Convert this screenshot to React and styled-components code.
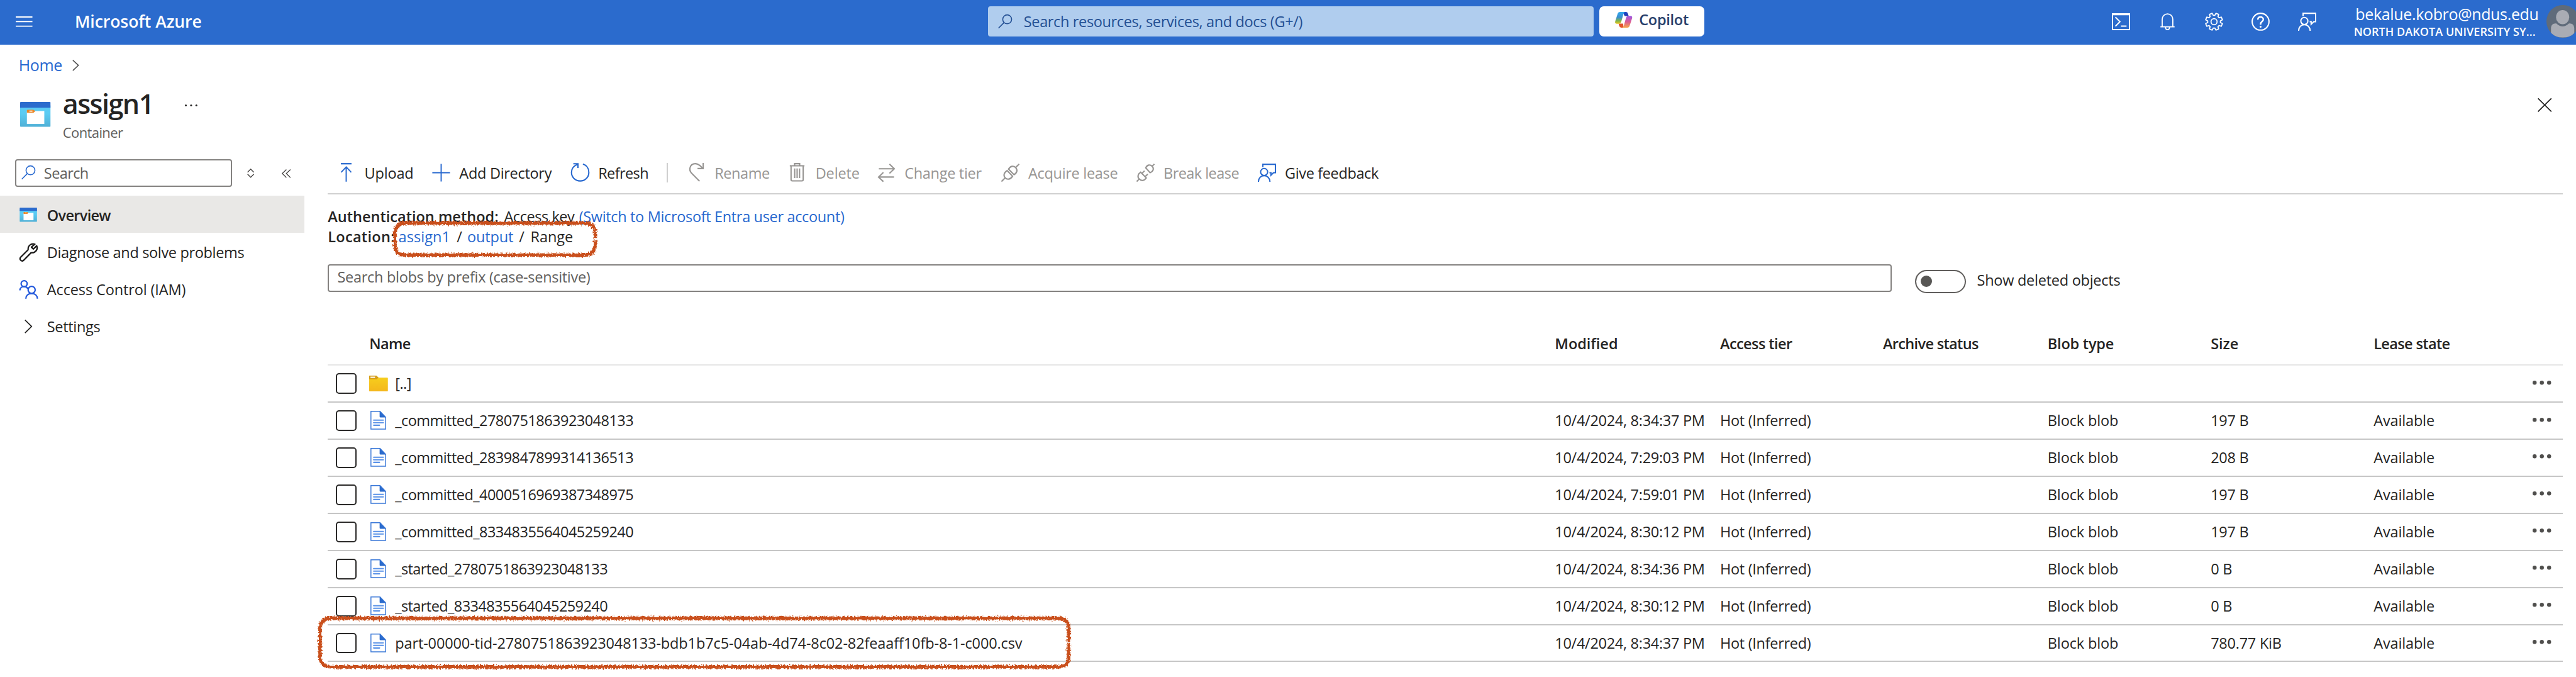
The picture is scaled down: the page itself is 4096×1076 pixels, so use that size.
import React from "react";
import styled, { createGlobalStyle, css } from "styled-components";

/* Design units are physical pixels of the portal at full zoom. */
const SCALE = 4096 / 5092;
const u = (n) => `${+(n * SCALE).toFixed(2)}px`;

const color = {
  brand: "#2b6bcd",
  link: "#2768cf",
  text: "#252423",
  subtle: "#605e5c",
  disabled: "#979593",
  mark: "#c9501a",
};

const GlobalStyle = createGlobalStyle`
  * { box-sizing: border-box; }
  html, body { margin: 0; background: #fff; }
  body {
    width: 4096px;
    height: 1076px;
    overflow: hidden;
    font-family: "Open Sans", "Noto Sans", sans-serif;
    font-size: 23.5px;
    color: ${color.text};
  }
`;

const Label = styled.span`
  white-space: pre;
  font-size: ${(p) => p.$size || 23.5}px;
  font-weight: ${(p) => (p.$strong ? 600 : 400)};
  letter-spacing: ${(p) => p.$track || 0}px;
  ${(p) => p.$tone && css`color: ${p.$tone};`}
`;

const Svg = styled.svg`
  display: block;
  flex: none;
  width: ${(p) => u(p.$w)};
  height: ${(p) => u(p.$h)};
  overflow: visible;
  fill: none;
  stroke: currentColor;
  stroke-width: ${(p) => p.$stroke || 2.4};
`;

const Icon = ({ w = 36, h = 36, stroke, children }) => (
  <Svg $w={w} $h={h} $stroke={stroke} viewBox={`0 0 ${w} ${h}`} aria-hidden="true">
    {children}
  </Svg>
);

/* ---------- icons ---------- */

const MenuIcon = () => (
  <Icon w={33} h={21}>
    <path d="M0 1.3H33M0 10.3H33M0 19.4H33" />
  </Icon>
);
const SearchIcon = () => (
  <Icon w={28} h={28} stroke={2}>
    <circle cx="18" cy="9.6" r="8.8" />
    <path d="M11.8 16L0.8 27" />
  </Icon>
);
const ShellIcon = () => (
  <Icon stroke={2.4}>
    <path d="M1.2 2.4H34.8V33.6H1.2ZM1.2 4.2H34.8M7 9L16 18L7 27M18 26.8H29" />
  </Icon>
);
const BellIcon = () => (
  <Icon stroke={2.2}>
    <path d="M7.5 27V13.5C7.5 7 12 2.6 18 2.6S28.5 7 28.5 13.5V27M4 28H32M14 28.5C14 31.5 15.6 33.6 18 33.6S22 31.5 22 28.5" />
  </Icon>
);
const GearIcon = () => {
  const pts = [];
  for (let i = 0; i < 8; i += 1) {
    [[-0.27, 12.6], [-0.17, 17], [0.17, 17], [0.27, 12.6]].forEach(([da, r]) => {
      const a = (i * Math.PI) / 4 + Math.PI / 8 + da;
      pts.push(`${(18 + r * Math.cos(a)).toFixed(2)},${(18 + r * Math.sin(a)).toFixed(2)}`);
    });
  }
  return (
    <Icon stroke={2.2}>
      <polygon points={pts.join(" ")} strokeLinejoin="round" />
      <circle cx="18" cy="18" r="6" />
    </Icon>
  );
};
const HelpIcon = () => (
  <Icon stroke={2.6}>
    <circle cx="18" cy="18" r="16.6" />
    <path d="M12.6 14C12.6 10.6 15 8.8 18 8.8S23.4 10.8 23.4 13.6C23.4 17.6 18 18 18 22.4V24" strokeWidth="3" />
    <circle cx="18" cy="28" r="1.9" fill="currentColor" stroke="none" />
  </Icon>
);
const FeedbackIcon = () => (
  <Icon stroke={2.5}>
    <path d="M10 7V1.4H34.8V18H31L26 23V18H23" />
    <circle cx="12.5" cy="16.6" r="7" />
    <path d="M1.2 36C1.2 29 6 23.8 12.5 23.8S24 29 24 36" />
  </Icon>
);
const ChevronRight = ({ w, h }) => (
  <Icon w={w} h={h} stroke={2}>
    <path d={`M1 0.8L${w - 1} ${h / 2}L1 ${h - 0.8}`} />
  </Icon>
);
const SortIcon = () => (
  <Icon w={14} h={18} stroke={1.8}>
    <path d="M0.8 7.2L7 1L13.2 7.2M0.8 10.8L7 17L13.2 10.8" />
  </Icon>
);
const CollapseIcon = () => (
  <Icon w={18} h={17} stroke={1.7}>
    <path d="M9.2 0.6L1 8.5L9.2 16.4M17.2 0.6L9 8.5L17.2 16.4" />
  </Icon>
);
const CloseIcon = () => (
  <Icon w={28} h={27} stroke={2.2}>
    <path d="M0.8 0.5L27.2 26.5M27.2 0.5L0.8 26.5" />
  </Icon>
);
const ContainerIcon = ({ w, h }) => (
  <Svg $w={w} $h={h} viewBox="0 0 60 49" aria-hidden="true">
    <defs>
      <linearGradient id="container-body" x1="0" y1="0" x2="0" y2="1">
        <stop offset="0" stopColor="#5bcdf6" />
        <stop offset="0.4" stopColor="#5bcbf2" />
        <stop offset="1" stopColor="#50b0d6" />
      </linearGradient>
    </defs>
    <g stroke="none">
      <rect y="6" width="60" height="43" rx="1.5" fill="url(#container-body)" />
      <path d="M0 11.5V1.5Q0 0 1.5 0H58.5Q60 0 60 1.5V11.5Z" fill={color.brand} />
      <rect x="13.4" y="18" width="34.4" height="25.6" fill="#fff" />
      <path d="M13.4 17Q13.4 15.4 15 15.4H26.5L30 18.2L26.5 21.6H13.4Z" fill="#e8872a" />
      <rect x="18.3" y="17.2" width="6" height="2" fill="#fff" />
    </g>
  </Svg>
);
const WrenchIcon = () => (
  <Icon stroke={2.8}>
    <path
      d="M31.5 3.4C25 -0.2 16.4 4 17 13.6L2.6 28C-1.6 33 4.6 38.4 8.8 34L23 19.4C31.8 20.4 37 12.6 34 5.8L27.6 12.2L23.6 8.6L30 2.6"
      strokeLinejoin="round"
    />
  </Icon>
);
const PeopleIcon = () => (
  <Icon w={36} h={37} stroke={2.8}>
    <circle cx="9.2" cy="7.3" r="6" />
    <path d="M0.8 20.5C0.8 16 4.6 13 9.2 13C12.4 13 15 14.4 16.4 17" />
    <circle cx="24" cy="19.5" r="7" />
    <path d="M12.6 37C12.6 31 17 26.6 24 26.6S35.4 31 35.4 37" />
  </Icon>
);
const UploadIcon = () => (
  <Icon h={37}>
    <path d="M7.5 1.5H28.5" strokeWidth="2.8" />
    <path d="M18 37V8M8 18.5L18 8L28 18.5" />
  </Icon>
);
const PlusIcon = () => (
  <Icon>
    <path d="M18 0.5V35.5M0.5 18H35.5" />
  </Icon>
);
const RefreshIcon = () => (
  <Icon h={37} stroke={2.6}>
    <path d="M23.5 2.2C31 4.4 35.2 11 35.2 18.6C35.2 28.4 27.6 35.6 18 35.6S0.9 28.4 0.9 18.8C0.9 11.6 5.6 5.4 13.2 2.6" />
    <path d="M4.5 1.5H13.6V10" />
  </Icon>
);
const RenameIcon = () => (
  <Icon h={37} stroke={2.6}>
    <path d="M24 36L8 20C2 13 5 1.4 15.6 1.4C22 1.4 25.6 5 30 10.4M31.2 0V11H20" />
  </Icon>
);
const TrashIcon = () => (
  <Icon h={37} stroke={2.6}>
    <path d="M3.5 5.5H32.5M13 5V1.4H23V5M6 6V33Q6 35.5 8.6 35.5H27.4Q30 35.5 30 33V6M13.2 11V30M18 11V30M22.8 11V30" />
  </Icon>
);
const SwapIcon = () => (
  <Icon stroke={2.6}>
    <path d="M3 10.2H33M24 1L33.6 10.2L24 19.4M33 26.6H3M12 17.4L2.4 26.6L12 35.6" />
  </Icon>
);
const PlugJoinedIcon = () => (
  <Icon stroke={2.6}>
    <path d="M0.5 35.5L8 28M28 8L35.5 0.8" />
    <path d="M11.5 13.8L22.4 25C18 31.6 12 32.4 8 28.2S4.8 18 11.5 13.8Z" />
    <path d="M14.4 11L25.4 22C32 18 32.6 12 28.4 7.8S18.6 4.6 14.4 11Z" />
  </Icon>
);
const PlugSplitIcon = () => (
  <Icon stroke={2.6}>
    <path d="M0.5 35.5L6 30M30.5 5.5L35.5 0.8" />
    <path d="M8.4 17L19.4 28.4C15 34.6 9.6 34.6 5.6 30.6S2.4 21 8.4 17Z" />
    <path d="M11 19.2L16 14.4M17.4 25.6L22.4 20.8" />
    <path d="M18.4 8.4L27 18C34.4 15 34.8 9 31 5.2S21.4 2 18.4 8.4Z" />
  </Icon>
);
const FolderIcon = () => (
  <Svg $w={37} $h={31} viewBox="0 0 37 31" aria-hidden="true">
    <defs>
      <linearGradient id="folder-body" x1="0" y1="0" x2="0" y2="1">
        <stop offset="0" stopColor="#f7d11d" />
        <stop offset="1" stopColor="#f4b71c" />
      </linearGradient>
    </defs>
    <g stroke="none">
      <path d="M0 1Q0 0 1 0H14L18.5 4H36Q37 4 37 5V30Q37 31 36 31H1Q0 31 0 30Z" fill="url(#folder-body)" />
      <path d="M0 1Q0 0 1 0H14L18.5 3.6L15 7H0Z" fill="#d59c18" />
      <rect x="2.6" y="2" width="9" height="2.4" fill="#fff" />
    </g>
  </Svg>
);
const FileIcon = () => (
  <Svg $w={31} $h={37} viewBox="0 0 31 37" aria-hidden="true">
    <path d="M1 1H19L30 12.6V36H1Z" fill="#fff" stroke="#3a78d8" strokeWidth="1.8" />
    <path d="M18.2 0.6L30.4 13H19.6Q18.2 13 18.2 11.6Z" fill={color.brand} stroke="none" />
    <path d="M6.4 18.4H25.4M6.4 23.4H25.4M6.4 28.4H18" stroke="#5b93e8" strokeWidth="2.6" strokeLinecap="round" />
  </Svg>
);
const Dots = ({ r, gap }) => (
  <Icon w={2 * gap + 2 * r} h={2 * r}>
    {[0, 1, 2].map((i) => (
      <circle key={i} cx={r + i * gap} cy={r} r={r} fill="currentColor" stroke="none" />
    ))}
  </Icon>
);
const CopilotLogo = () => (
  <Svg $w={34} $h={31} viewBox="0 0 34 31" aria-hidden="true">
    <defs>
      <linearGradient id="cp-left" x1="0" y1="0" x2="0" y2="1">
        <stop offset="0" stopColor="#2fa8ee" />
        <stop offset="0.45" stopColor="#3a8fd0" />
        <stop offset="0.75" stopColor="#7fb54c" />
        <stop offset="1" stopColor="#ecc51d" />
      </linearGradient>
      <linearGradient id="cp-right" x1="0" y1="0" x2="0" y2="1">
        <stop offset="0" stopColor="#9a58e6" />
        <stop offset="0.5" stopColor="#dc5a92" />
        <stop offset="1" stopColor="#f6a54b" />
      </linearGradient>
      <linearGradient id="cp-top" x1="0" y1="0" x2="1" y2="1">
        <stop offset="0" stopColor="#1b4fd0" />
        <stop offset="1" stopColor="#2233a8" />
      </linearGradient>
    </defs>
    <g stroke="none">
      <path d="M15 0H21.5Q24.5 0 25.4 3L27 8H19Z" fill="url(#cp-top)" />
      <path d="M7 23H16L17 31H12.5Q9.4 31 8.4 28Z" fill="#e4532b" />
      <path d="M10 0H19.5Q17.6 1 16.6 4L12.4 19Q11 23.4 7.4 23.4H3.6Q-1 23.4 0.4 18.4L5 4Q6.2 0 10 0Z" fill="url(#cp-left)" />
      <path d="M24 31H14.5Q16.4 30 17.4 27L21.6 12Q23 7.8 26.6 7.8H30.4Q35 7.8 33.6 12.8L29 27Q27.8 31 24 31Z" fill="url(#cp-right)" />
    </g>
  </Svg>
);

/* ---------- top bar ---------- */

const TopBar = styled.header`
  display: flex;
  width: 4096px;
  height: ${u(88)};
  overflow: hidden;
  background: ${color.brand};
  color: #fff;
`;
const Brand = styled.div`
  display: flex;
  align-items: center;
  gap: ${u(83.5)};
  width: ${u(1953.6)};
  height: ${u(85)};
  padding-left: ${u(31.4)};
`;
const GlobalSearch = styled.div`
  display: flex;
  align-items: center;
  gap: ${u(23)};
  width: ${u(1196.8)};
  height: ${u(60)};
  margin-top: ${u(12)};
  padding-left: ${u(19)};
  border-radius: 4px;
  background: #b0cdee;
  color: #234f93;
`;
const CopilotButton = styled.button`
  display: flex;
  align-items: center;
  gap: ${u(13)};
  width: ${u(207.6)};
  height: ${u(60)};
  margin: ${u(12)} 0 0 ${u(11.5)};
  padding: 0 0 ${u(6)} ${u(31)};
  border: 0;
  border-radius: 7px;
  background: #fff;
  color: #27406b;
  font-family: inherit;
`;
const TopActions = styled.nav`
  display: grid;
  grid-template-columns: repeat(5, ${u(92)});
  place-items: center;
  height: ${u(85)};
  margin-left: auto;
`;
const Account = styled.div`
  display: flex;
  flex-direction: column;
  align-items: flex-end;
  width: ${u(412)};
  padding-top: ${u(10)};
`;
const AccountName = styled(Label)`
  line-height: ${u(36)};
`;
const AccountOrg = styled(Label)`
  margin-right: ${u(6)};
  line-height: ${u(34.6)};
`;
const Avatar = styled.div`
  flex: none;
  width: ${u(64)};
  height: ${u(64)};
  margin: ${u(10)} ${u(-6)} 0 ${u(16)};
  overflow: hidden;
  border-radius: 50%;
  background: #5f6b7a;
`;

/* ---------- page heading ---------- */

const Breadcrumb = styled.div`
  display: flex;
  align-items: center;
  gap: ${u(20)};
  height: ${u(78)};
  padding: ${u(3)} 0 0 ${u(37)};
  color: #555;
`;
const Heading = styled.div`
  display: flex;
  height: ${u(132)};
  padding-left: ${u(40)};
`;
const HeadingIcon = styled.div`
  width: ${u(84)};
  padding-top: ${u(35.7)};
`;
const HeadingText = styled.div`
  display: flex;
  flex-direction: column;
`;
const Title = styled(Label)`
  line-height: ${u(76.4)};
`;
const Kind = styled(Label)`
  line-height: ${u(38)};
`;
const HeadingMore = styled.div`
  display: flex;
  align-items: center;
  height: ${u(83.4)};
  margin-left: ${u(62)};
`;
const HeadingClose = styled(HeadingMore)`
  margin: 0 ${u(48)} 0 auto;
`;

/* ---------- side menu ---------- */

const Body = styled.div`
  display: flex;
`;
const Side = styled.aside`
  width: ${u(648)};
`;
const SideTools = styled.div`
  display: flex;
  align-items: center;
  height: ${u(89)};
  padding: 0 0 ${u(0)} ${u(29.4)};
`;
const FilterBox = styled.div`
  display: flex;
  align-items: center;
  gap: ${u(16)};
  width: ${u(429.6)};
  height: ${u(54.7)};
  margin-right: ${u(29.6)};
  padding: 0 0 ${u(2)} ${u(11)};
  border: 2px solid #848280;
  border-radius: 4px;
  color: ${color.link};
`;
const SideTool = styled.div`
  margin-right: ${u(54.5)};
  color: #484644;
`;
const SideItem = styled.div`
  display: flex;
  align-items: center;
  width: ${u(602)};
  height: ${u(73.4)};
  padding: ${u(2)} 0 0 ${u(38.5)};
  background: ${(p) => (p.$active ? "#e9e8e6" : "transparent")};
`;
const SideIcon = styled.div`
  display: flex;
  width: ${u(54.5)};
  padding-left: ${(p) => u(p.$indent || 0)};
  color: ${(p) => p.$tone || "#1b1a19"};
`;

/* ---------- main ---------- */

const Main = styled.main`
  width: ${u(4418)};
`;
const Toolbar = styled.div`
  display: grid;
  grid-template-columns:
    ${[187.5, 274.5, 230, 199.5, 176, 244.6, 267.4, 240, 300].map(u).join(" ")};
  height: ${u(86)};
  padding-left: ${u(18.5)};
  border-bottom: 2px solid #d0d0d0;
`;
const Command = styled.div`
  display: flex;
  align-items: center;
  gap: ${u(18)};
  height: ${u(86)};
  padding-top: 1px;
  color: ${(p) => (p.$disabled ? color.disabled : color.text)};
`;
const CommandIcon = styled.div`
  padding-bottom: 1px;
  color: ${(p) => (p.$disabled ? color.disabled : color.link)};
`;
const Divider = styled.div`
  width: 2px;
  height: ${u(39)};
  margin: 0 ${u(38)} 0 auto;
  background: #cfcfcf;
`;
const Facts = styled.div`
  display: flex;
  flex-direction: column;
  height: ${u(103.3)};
  padding-top: ${u(25.2)};
`;
const Fact = styled.div`
  display: flex;
  height: ${u(39.7)};
  line-height: ${u(39.7)};
`;
const Part = styled(Label)`
  margin-left: ${(p) => u(p.$before || 0)};
`;
const Marked = styled.div`
  position: relative;
  display: flex;
`;
const BlobTools = styled.div`
  display: flex;
  height: ${u(150)};
  padding-top: ${u(34.7)};
`;
const PrefixBox = styled.div`
  display: flex;
  align-items: center;
  width: ${u(3092)};
  height: ${u(54.7)};
  padding: 0 0 ${u(4)} ${u(16.5)};
  border: 2px solid #848280;
  border-radius: 4px;
  color: ${color.subtle};
`;
const Switch = styled.div`
  display: flex;
  align-items: center;
  width: ${u(101)};
  height: ${u(46)};
  margin: ${u(11)} ${u(22)} 0 ${u(45)};
  padding-left: ${u(9)};
  border: 2px solid #605e5c;
  border-radius: ${u(23)};
`;
const Knob = styled.div`
  width: ${u(23)};
  height: ${u(23)};
  border-radius: 50%;
  background: #575654;
`;
const SwitchLabel = styled(Label)`
  margin-top: ${u(11.7)};
  line-height: ${u(40)};
`;

const Table = styled.div`
  width: ${u(4418)};
`;
const Row = styled.div`
  display: grid;
  grid-template-columns: ${[82, 2343.5, 326.5, 322, 325.5, 322.5, 322, 314, 60].map(u).join(" ")};
  align-items: center;
  height: ${(p) => u(p.$head ? 85 : 73.28)};
  border-bottom: 2px solid ${(p) => (p.$head ? "#e6e6e6" : "#c6c6c6")};
`;
const Checkbox = styled.div`
  width: ${u(41.5)};
  height: ${u(41)};
  margin-left: ${u(16)};
  border: 2px solid #2b2a29;
  border-radius: 5px;
`;
const NameCell = styled.div`
  position: relative;
  display: flex;
  align-items: center;
`;
const TypeIcon = styled.div`
  width: ${u(51)};
  padding-left: ${(p) => u(p.$indent || 0)};
`;
const RowMenu = styled.div`
  padding-bottom: ${u(4)};
  color: #4f4e4c;
`;

/* Hand-drawn marker outline, laid over the thing it circles. */
const MarkerSvg = styled.svg`
  position: absolute;
  left: ${(p) => u(p.$x)};
  top: ${(p) => u(p.$y)};
  width: ${(p) => u(p.$w)};
  height: ${(p) => u(p.$h)};
  overflow: visible;
  pointer-events: none;
`;
const Marker = ({ id, x, y, w, h, rx, ry }) => {
  const l = 3.5;
  const t = 4.5;
  const r = w - 3.5;
  const b = h - 4.5;
  const m = h / 2;
  const d = `M${r} ${m + 2}V${b - ry}Q${r} ${b} ${r - rx} ${b}H${l + rx}Q${l} ${b} ${l} ${b - ry}V${t + ry}Q${l} ${t} ${l + rx} ${t}H${r - rx}Q${r} ${t} ${r} ${t + ry}V${m - 2}`;
  return (
    <MarkerSvg $x={x} $y={y} $w={w} $h={h} viewBox={`0 0 ${w} ${h}`} aria-hidden="true">
      <filter id={id} filterUnits="userSpaceOnUse" x="-10" y="-10" width={w + 20} height={h + 20}>
        <feTurbulence type="fractalNoise" baseFrequency="0.35 0.3" numOctaves="2" seed="7" result="n" />
        <feDisplacementMap in="SourceGraphic" in2="n" scale="9" xChannelSelector="R" yChannelSelector="G" />
      </filter>
      <g fill="none" stroke={color.mark} filter={`url(#${id})`}>
        <path d={d} strokeWidth="7" />
      </g>
    </MarkerSvg>
  );
};

/* ---------- data ---------- */

const commands = [
  { label: "Upload", icon: UploadIcon, track: -0.17 },
  { label: "Add Directory", icon: PlusIcon, track: -0.3 },
  { label: "Refresh", icon: RefreshIcon, track: -0.6, divider: true },
  { label: "Rename", icon: RenameIcon, track: -0.41, disabled: true },
  { label: "Delete", icon: TrashIcon, track: -0.12, disabled: true },
  { label: "Change tier", icon: SwapIcon, track: -0.3, disabled: true },
  { label: "Acquire lease", icon: PlugJoinedIcon, track: -0.3, disabled: true },
  { label: "Break lease", icon: PlugSplitIcon, track: -0.55, disabled: true },
  { label: "Give feedback", icon: FeedbackIcon, track: -0.38 },
];

const menu = [
  { label: "Overview", icon: <ContainerIcon w={35} h={28} />, track: -0.69, active: true },
  { label: "Diagnose and solve problems", icon: <WrenchIcon />, track: -0.34 },
  { label: "Access Control (IAM)", icon: <PeopleIcon />, tone: "#2258dc", track: -0.13 },
  { label: "Settings", icon: <ChevronRight w={15} h={27} />, indent: 10, track: -0.33 },
];

const headers = [
  ["Name", -0.64],
  ["Modified", -0.03],
  ["Access tier", -0.58],
  ["Archive status", -0.66],
  ["Blob type", -0.21],
  ["Size", -0.03],
  ["Lease state", -0.63],
];

const blobs = [
  ["_committed_2780751863923048133", "10/4/2024, 8:34:37 PM", "197 B", -0.54],
  ["_committed_2839847899314136513", "10/4/2024, 7:29:03 PM", "208 B", -0.54],
  ["_committed_4000516969387348975", "10/4/2024, 7:59:01 PM", "197 B", -0.54],
  ["_committed_8334835564045259240", "10/4/2024, 8:30:12 PM", "197 B", -0.54],
  ["_started_2780751863923048133", "10/4/2024, 8:34:36 PM", "0 B", -0.58],
  ["_started_8334835564045259240", "10/4/2024, 8:30:12 PM", "0 B", -0.58],
  [
    "part-00000-tid-2780751863923048133-bdb1b7c5-04ab-4d74-8c02-82feaaff10fb-8-1-c000.csv",
    "10/4/2024, 8:34:37 PM",
    "780.77 KiB",
    -0.12,
  ],
];

export default function App() {
  return (
    <>
      <GlobalStyle />
      <TopBar>
        <Brand>
          <MenuIcon />
          <Label $strong $size={26.5} $track={-0.04}>Microsoft Azure</Label>
        </Brand>
        <GlobalSearch>
          <SearchIcon />
          <Label $track={-0.35}>Search resources, services, and docs (G+/)</Label>
        </GlobalSearch>
        <CopilotButton>
          <CopilotLogo />
          <Label $strong $track={-0.25}>Copilot</Label>
        </CopilotButton>
        <TopActions>
          <ShellIcon />
          <BellIcon />
          <GearIcon />
          <HelpIcon />
          <FeedbackIcon />
        </TopActions>
        <Account>
          <AccountName $size={25} $track={-0.35}>bekalue.kobro@ndus.edu</AccountName>
          <AccountOrg $strong $size={18} $track={0.05}>NORTH DAKOTA UNIVERSITY SY...</AccountOrg>
        </Account>
        <Avatar>
          <Icon w={64} h={64}>
            <path
              d="M9 64V46C9 39 14 35.6 20 36.6C27 44 37 44 44 36.6C50 35.6 55 39 55 46V64Z"
              fill="#a9acb4"
              stroke="none"
            />
            <ellipse cx="32" cy="24" rx="13" ry="14" fill="#a9acb4" stroke="none" />
          </Icon>
        </Avatar>
      </TopBar>

      <Breadcrumb>
        <Label $size={25} $track={-0.34} $tone={color.link}>Home</Label>
        <ChevronRight w={13} h={22} />
      </Breadcrumb>

      <Heading>
        <HeadingIcon>
          <ContainerIcon w={60} h={49} />
        </HeadingIcon>
        <HeadingText>
          <Title $strong $size={43} $track={-1.5}>assign1</Title>
          <Kind $size={22} $track={-0.6} $tone={color.subtle}>Container</Kind>
        </HeadingText>
        <HeadingMore>
          <Dots r={1.9} gap={10.4} />
        </HeadingMore>
        <HeadingClose>
          <CloseIcon />
        </HeadingClose>
      </Heading>

      <Body>
        <Side>
          <SideTools>
            <FilterBox>
              <SearchIcon />
              <Label $track={-0.6} $tone={color.subtle}>Search</Label>
            </FilterBox>
            <SideTool><SortIcon /></SideTool>
            <SideTool><CollapseIcon /></SideTool>
          </SideTools>
          {menu.map((m) => (
            <SideItem key={m.label} $active={m.active}>
              <SideIcon $indent={m.indent} $tone={m.tone}>{m.icon}</SideIcon>
              <Label $strong={m.active} $track={m.track}>{m.label}</Label>
            </SideItem>
          ))}
        </Side>

        <Main>
          <Toolbar>
            {commands.map(({ label, icon: Glyph, track, disabled, divider }) => (
              <Command key={label} $disabled={disabled}>
                <CommandIcon $disabled={disabled}><Glyph /></CommandIcon>
                <Label $track={track}>{label}</Label>
                {divider && <Divider />}
              </Command>
            ))}
          </Toolbar>

          <Facts>
            <Fact>
              <Part $strong $track={0.01}>Authentication method:</Part>
              <Part $before={11} $track={-0.44}>Access key</Part>
              <Part $before={9} $track={-0.34} $tone={color.link}>(Switch to Microsoft Entra user account)</Part>
            </Fact>
            <Fact>
              <Part $strong $track={0.3}>Location:</Part>
              <Marked>
                <Part $before={7} $track={0.05} $tone={color.link}>assign1</Part>
                <Part $before={13}>/</Part>
                <Part $before={10} $track={-0.14} $tone={color.link}>output</Part>
                <Part $before={11}>/</Part>
                <Part $before={12}>Range</Part>
                <Marker id="rough-path" x={-4} y={-12.3} w={403} h={72} rx={20} ry={22} />
              </Marked>
            </Fact>
          </Facts>

          <BlobTools>
            <PrefixBox>
              <Label $track={-0.3}>Search blobs by prefix (case-sensitive)</Label>
            </PrefixBox>
            <Switch><Knob /></Switch>
            <SwitchLabel $track={-0.26}>Show deleted objects</SwitchLabel>
          </BlobTools>

          <Table>
            <Row $head>
              <span />
              {headers.map(([h, track]) => (
                <Label key={h} $strong $track={track}>{h}</Label>
              ))}
            </Row>
            <Row>
              <Checkbox />
              <NameCell>
                <TypeIcon><FolderIcon /></TypeIcon>
                <Label $track={-0.5}>[..]</Label>
              </NameCell>
              <span /><span /><span /><span /><span /><span />
              <RowMenu><Dots r={4} gap={14.3} /></RowMenu>
            </Row>
            {blobs.map(([name, modified, size, track], i) => (
              <Row key={name}>
                <Checkbox />
                <NameCell>
                  <TypeIcon $indent={2.6}><FileIcon /></TypeIcon>
                  <Label $track={track}>{name}</Label>
                  {i === blobs.length - 1 && (
                    <Marker id="rough-row" x={-101} y={-33} w={1487} h={105} rx={22} ry={20} />
                  )}
                </NameCell>
                <Label $track={-0.29}>{modified}</Label>
                <Label $track={-0.3}>Hot (Inferred)</Label>
                <span />
                <Label $track={-0.13}>Block blob</Label>
                <Label $track={-0.25}>{size}</Label>
                <Label $track={-0.15}>Available</Label>
                <RowMenu><Dots r={4} gap={14.3} /></RowMenu>
              </Row>
            ))}
          </Table>
        </Main>
      </Body>
    </>
  );
}
